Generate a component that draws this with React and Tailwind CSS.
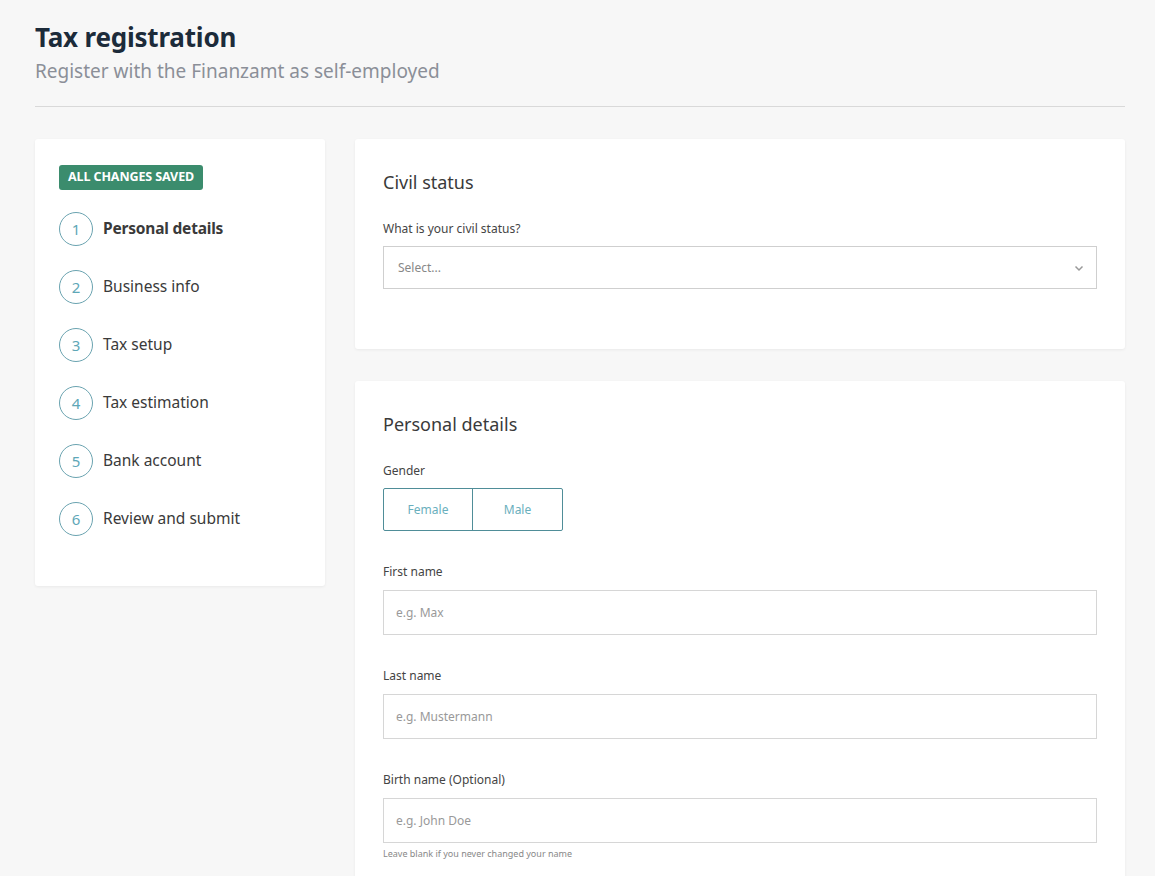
const steps = [
  "Personal details",
  "Business info",
  "Tax setup",
  "Tax estimation",
  "Bank account",
  "Review and submit",
];

const Field = ({ label, placeholder, hint }) => (
  <div className="flex flex-col">
    <label className="text-[12px] text-[#444] leading-none mb-[12px]">{label}</label>
    <div className="h-[45px] border border-[#d6d6d6] bg-white flex items-center px-[12px] text-[12px] text-[#999]">
      {placeholder}
    </div>
    {hint && <p className="text-[9px] text-[#888] mt-[6px] leading-none">{hint}</p>}
  </div>
);

const App = () => (
  <div
    className="min-h-screen bg-[#f7f7f7] pl-[35px] pr-[30px] pt-[20px] pb-10"
    style={{ fontFamily: "'Noto Sans', Lato, sans-serif" }}
  >
    <h1 className="text-[26px] font-bold text-[#1c2b3a] leading-[34px] tracking-[-0.2px]">Tax registration</h1>
    <p className="text-[19px] text-[#8b8f98] mt-[4px] leading-[26px]">
      Register with the Finanzamt as self-employed
    </p>
    <hr className="mt-[22px] border-t border-[#d9d9d9]" />

    <div className="flex gap-[30px] mt-[32px] items-start">
      <aside className="w-[290px] shrink-0 bg-white rounded-[3px] shadow-[0_1px_3px_rgba(0,0,0,0.06)] px-[24px] pt-[24px] pb-[50px]">
        <span className="inline-flex items-center h-[25px] px-[9px] rounded-[3px] bg-[#3b8c6d] text-white text-[12.5px] font-bold tracking-[-0.1px]">
          ALL CHANGES SAVED
        </span>
        <ul className="mt-[22px] flex flex-col gap-[24px]">
          {steps.map((s, i) => (
            <li key={s} className="flex items-center gap-[10px]">
              <span className="w-[34px] h-[34px] rounded-full border border-[#6aa3b0] flex items-center justify-center text-[15px] text-[#5ea7b7]">
                {i + 1}
              </span>
              <span className={`text-[15.5px] text-[#3a3a3a] ${i === 0 ? "font-bold tracking-[-0.2px]" : ""}`}>{s}</span>
            </li>
          ))}
        </ul>
      </aside>

      <main className="flex-1 flex flex-col gap-[32px]">
        <section className="bg-white rounded-[3px] shadow-[0_1px_3px_rgba(0,0,0,0.06)] px-[28px] pt-[32px] h-[210px]">
          <h2 className="text-[18px] text-[#3a3a3a] leading-[22px]">Civil status</h2>
          <label className="block text-[12px] text-[#444] mt-[30px] leading-none">
            What is your civil status?
          </label>
          <div className="mt-[11px] h-[43px] border border-[#cfcfcf] flex items-center justify-between pl-[14px] pr-[12px] text-[12px] text-[#888]">
            <span>Select...</span>
            <svg width="10" height="10" viewBox="0 0 10 10" fill="none" stroke="#999" strokeWidth="1.5">
              <path d="M1.5 3.5 5 7l3.5-3.5" />
            </svg>
          </div>
        </section>

        <section className="bg-white rounded-[3px] shadow-[0_1px_3px_rgba(0,0,0,0.06)] px-[28px] pt-[32px] pb-[28px]">
          <h2 className="text-[18px] text-[#3a3a3a] leading-[22px]">Personal details</h2>
          <label className="block text-[12px] text-[#444] mt-[30px] leading-none">Gender</label>
          <div className="mt-[11px] inline-flex h-[43px] border border-[#4f8d98] rounded-[2px]">
            <button className="w-[89px] text-[12px] text-[#6aafbd] border-r border-[#4f8d98]">Female</button>
            <button className="w-[89px] text-[12px] text-[#6aafbd]">Male</button>
          </div>
          <div className="mt-[35px] flex flex-col gap-[35px]">
            <Field label="First name" placeholder="e.g. Max" />
            <Field label="Last name" placeholder="e.g. Mustermann" />
            <Field
              label="Birth name (Optional)"
              placeholder="e.g. John Doe"
              hint="Leave blank if you never changed your name"
            />
          </div>
        </section>
      </main>
    </div>
  </div>
);

export default App;
